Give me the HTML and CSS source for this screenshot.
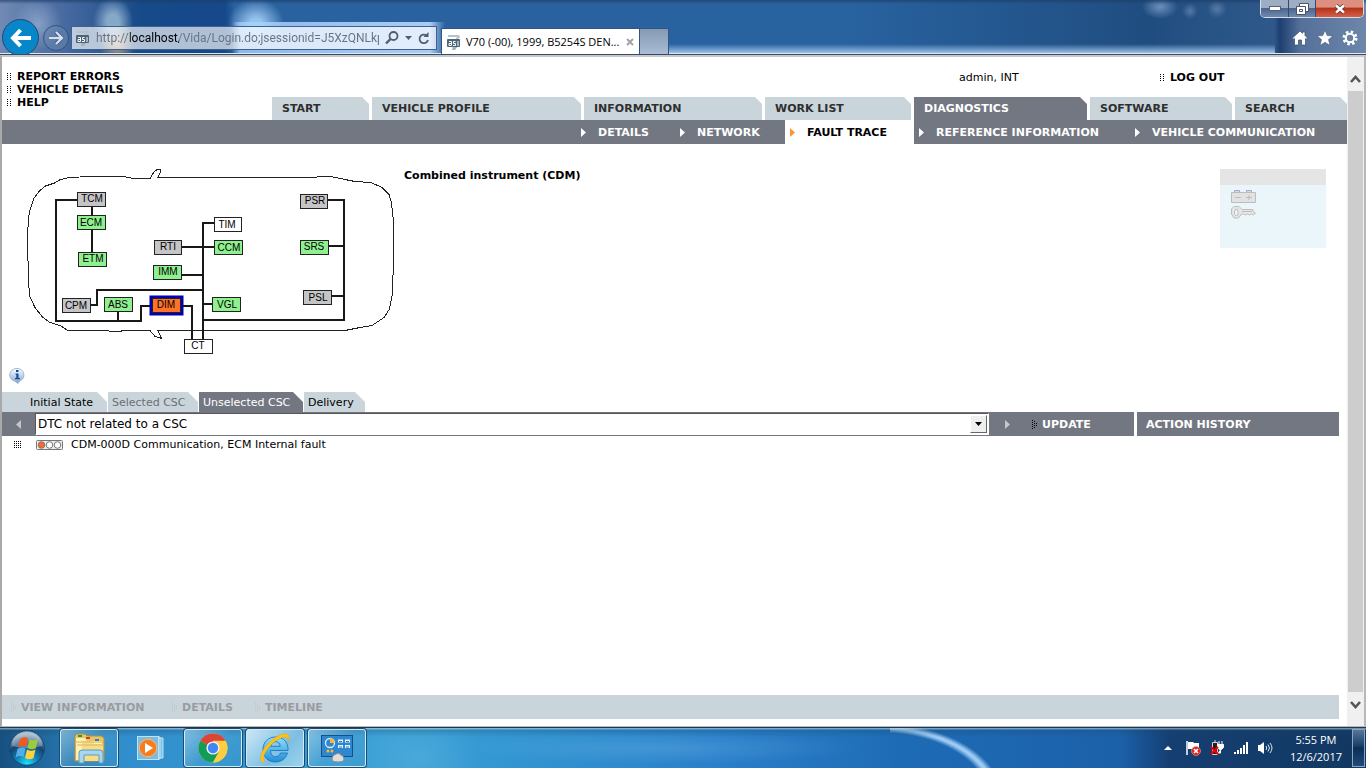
FILE: index.html
```html
<!DOCTYPE html>
<html lang="en">
<head>
<meta charset="utf-8">
<title>V70 (-00), 1999, B5254S DENSO</title>
<link rel="stylesheet" href="styles.css">
</head>
<body>
<svg class="defs" width="0" height="0" aria-hidden="true">
  <defs>
    <symbol id="site" viewBox="0 0 14 16">
      <path d="M1 1h11l1 2-3 3H8l2-3H1z" fill="#b3c2cf"/>
      <path d="M6 12h5l-3 4H5z" fill="#9fb0bf"/>
      <rect x="0" y="5" width="13" height="8" rx="1" fill="#4b6478"/>
      <path d="M2 7.500h2.500v4H2v-2h2.500M8.500 7.500H6.500v2h2v2H6M11 7v5" fill="none" stroke="#fff"/>
    </symbol>
    <symbol id="dots" viewBox="0 0 4 8">
      <path d="M0 .5h1m2 0h1M0 2.500h1m2 0h1M0 4.500h1m2 0h1M0 6.500h1m2 0h1" stroke="#000"/>
    </symbol>
    <symbol id="tri" viewBox="0 0 5 9"><path d="M0 0l5 4.500L0 9z" fill="currentColor"/></symbol>
    <symbol id="dottri" viewBox="0 0 6 9">
      <path d="M0 .5h1M2 1.500h1M0 2.500h1M4 3.500h1M2 3.500h1M0 4.500h1M2 5.500h1M4 5.500h1M0 6.500h1M2 7.500h1M0 8.500h1" stroke="currentColor"/>
    </symbol>
  </defs>
</svg>

<header class="chrome">
  <div class="nav-buttons">
    <button class="back" aria-label="Back"><svg width="22" height="20" viewBox="0 0 22 20"><path d="M10.500 2L3 10l7.500 8M3 10h18" fill="none" stroke="#fff" stroke-width="4"/></svg></button>
    <button class="forward" aria-label="Forward"><svg width="16" height="14" viewBox="0 0 16 14"><path d="M8 1l6 6-6 6M14 7H1" fill="none" stroke="#3d5a85" stroke-width="4"/><path d="M8 1l6 6-6 6M14 7H1" fill="none" stroke="#d4deec" stroke-width="2.400"/></svg></button>
  </div>
  <div class="address">
    <svg width="14" height="16"><use href="#site"/></svg>
    <input class="url" type="text" aria-label="Address" value="http://localhost/Vida/Login.do;jsessionid=J5XzQNLkp9">
    <button class="tool" aria-label="Search"><svg width="14" height="14" viewBox="0 0 14 14"><circle cx="8.500" cy="5" r="4" fill="none" stroke="#525d6c" stroke-width="1.800"/><path d="M5.500 8L1 12.500" stroke="#525d6c" stroke-width="2.400"/></svg></button>
    <button class="tool" aria-label="Address history"><svg width="7" height="4" viewBox="0 0 7 4"><path d="M0 0h7L3.500 4z" fill="#525d6c"/></svg></button>
    <button class="tool" aria-label="Refresh"><svg width="12" height="13" viewBox="0 0 12 13"><path d="M8.500 3.500A4.300 4.300 0 1 0 10 8" fill="none" stroke="#525d6c" stroke-width="1.800"/><path d="M10.500 0v5H5.500z" fill="#525d6c"/></svg></button>
  </div>
  <div class="page-tab">
    <svg width="14" height="16"><use href="#site"/></svg>
    <span class="page-tab-title">V70 (-00), 1999, B5254S DEN...</span>
    <button class="tool" aria-label="Close tab"><svg width="8" height="8" viewBox="0 0 8 8"><path d="M1 1l6 6M7 1L1 7" stroke="#a3a3a3" stroke-width="2"/></svg></button>
  </div>
  <button class="new-tab" aria-label="New tab"></button>
  <div class="chrome-right">
    <div class="window-buttons">
      <button class="win" aria-label="Minimize"><svg width="12" height="5" viewBox="0 0 12 5"><rect x=".5" y=".5" width="11" height="4" fill="#fff" stroke="#55617a"/></svg></button>
      <button class="win win-restore" aria-label="Restore"><svg width="13" height="12" viewBox="0 0 13 12"><path d="M3.500.5h9v8h-3v3h-9v-8h3z" fill="#fff" stroke="#4a5368"/><path d="M3.500 6.500h3v2h-3zM3.500 3.500h6v5" fill="none" stroke="#4a5368"/></svg></button>
      <button class="win win-close" aria-label="Close"><svg width="12" height="10" viewBox="0 0 12 10"><path d="M2 1.500l8 7M10 1.500l-8 7" stroke="#56323a" stroke-width="4"/><path d="M2 1.500l8 7M10 1.500l-8 7" stroke="#fff" stroke-width="2.400"/></svg></button>
    </div>
    <div class="chrome-tools">
      <button class="tool" aria-label="Home"><svg width="16" height="16" viewBox="0 0 16 16"><path d="M8 1l2.500 2.300V2h2.500v3.500l2.500 2.500-1 1.200-1-.7V15H9.500v-5h-3v5h-4V8.500l-1 .7L.5 8z" fill="#fff" stroke="#384b6b" stroke-width=".7"/></svg></button>
      <button class="tool" aria-label="Favorites"><svg width="16" height="16" viewBox="0 0 16 16"><path d="M8 .3l2.200 5.300 5.700.4-4.400 3.600 1.500 5.800L8 12.300l-5 3.100 1.500-5.800L.1 6l5.700-.4z" fill="#fff" stroke="#384b6b" stroke-width=".5"/></svg></button>
      <button class="tool" aria-label="Tools"><svg width="16" height="16" viewBox="0 0 16 16"><circle cx="8" cy="8" r="6" fill="none" stroke="#fff" stroke-width="3" stroke-dasharray="2.400 2.310"/><circle cx="8" cy="8" r="4.200" fill="none" stroke="#fff" stroke-width="2"/></svg></button>
    </div>
  </div>
</header>

<div class="window">
  <div class="page">
    <div class="masthead">
      <ul class="quick-links">
        <li><svg width="4" height="8"><use href="#dots"/></svg><a href="#report">REPORT ERRORS</a></li>
        <li><svg width="4" height="8"><use href="#dots"/></svg><a href="#vehicle">VEHICLE DETAILS</a></li>
        <li><svg width="4" height="8"><use href="#dots"/></svg><a href="#help">HELP</a></li>
      </ul>
      <div class="masthead-right">
        <div class="session">
          <span class="user">admin, INT</span>
          <span class="logout"><svg width="4" height="8"><use href="#dots"/></svg><a href="#logout">LOG OUT</a></span>
        </div>
        <nav class="main-tabs" aria-label="Main">
          <a href="#start">START</a>
          <a href="#profile">VEHICLE PROFILE</a>
          <a href="#information">INFORMATION</a>
          <a href="#worklist">WORK LIST</a>
          <a class="current" href="#diagnostics">DIAGNOSTICS</a>
          <a href="#software">SOFTWARE</a>
          <a href="#search">SEARCH</a>
        </nav>
      </div>
    </div>
    <nav class="sub-nav" aria-label="Diagnostics">
      <a href="#details"><svg width="5" height="9"><use href="#tri"/></svg>DETAILS</a>
      <a href="#network"><svg width="5" height="9"><use href="#tri"/></svg>NETWORK</a>
      <a class="current" href="#fault"><svg width="5" height="9"><use href="#tri"/></svg>FAULT TRACE</a>
      <a href="#reference"><svg width="5" height="9"><use href="#tri"/></svg>REFERENCE INFORMATION</a>
      <a href="#communication"><svg width="5" height="9"><use href="#tri"/></svg>VEHICLE COMMUNICATION</a>
    </nav>

    <main class="content">
      <section class="overview">
        <svg class="car" width="368" height="192" viewBox="27 165 368 192" role="img" aria-label="Vehicle network">
          <path class="outline" d="M27.500 236L28.500 218L29.500 212L33.500 199L39.500 191L45.500 186L54.500 183L59.500 180L68.500 177.500L91 176.500H123L134 178.500H150L154 172L157 169.500H160.500V172L158 177.500H316L318 176.500H331L345 179.500L355 181.500L371 182.500L382 187.500L389 194.500L391.500 203L393.500 222V258L392.500 293L389.500 309L384 317.500L372 325.500L360 327.500L345 330.500H158L161.500 338.500L155 336.500L150 330.500H123L120 331.500H110L108 330.500H68L60 325.500L50 322.500L42 316.500L35 307.500L30 297L28.500 284L27.500 236"/>
          <path class="wire" d="M77 200H56V321H141V306H151M92 206V254M118 312V320M182 306H192V340M214 223H203V340M182 247H214M182 275H203M90 305H97V290H203M203 304H213M328 200H344V320H203M328 246H344M331 296H344"/>
          <g class="off"><rect x="77.500" y="192.500" width="28" height="14"/><rect x="300.500" y="194.500" width="27" height="14"/><rect x="154.500" y="240.500" width="27" height="14"/><rect x="62.500" y="298.500" width="28" height="14"/><rect x="303.500" y="290.500" width="28" height="14"/></g>
          <g class="ok"><rect x="77.500" y="215.500" width="28" height="14"/><rect x="78.500" y="252.500" width="28" height="14"/><rect x="153.500" y="265.500" width="28" height="14"/><rect x="104.500" y="297.500" width="28" height="14"/><rect x="214.500" y="240.500" width="28" height="14"/><rect x="212.500" y="297.500" width="28" height="14"/><rect x="300.500" y="240.500" width="28" height="14"/></g>
          <g class="plain"><rect x="214.500" y="217.500" width="27" height="14"/><rect x="184.500" y="339.500" width="28" height="14"/></g>
          <rect x="151" y="297" width="31" height="17" fill="#ff7128" stroke="#0000b4" stroke-width="3"/>
          <rect x="152.500" y="298.500" width="28" height="14" fill="none" stroke="#222"/>
          <g class="labels">
            <text x="92" y="202">TCM</text><text x="91" y="226">ECM</text><text x="93" y="262">ETM</text>
            <text x="315" y="204">PSR</text><text x="314" y="250">SRS</text><text x="318" y="301">PSL</text>
            <text x="227" y="228">TIM</text><text x="229" y="251">CCM</text><text x="227" y="308">VGL</text>
            <text x="168" y="250">RTI</text><text x="168" y="275">IMM</text><text x="166" y="308">DIM</text>
            <text x="76" y="309">CPM</text><text x="118" y="308">ABS</text><text x="198" y="349">CT</text>
          </g>
        </svg>
        <h1 class="component">Combined instrument (CDM)</h1>
        <aside class="status" aria-label="Vehicle status">
          <svg width="26" height="30" viewBox="0 0 26 30">
            <path d="M3.500 2V.5h5V2m7 0V.5h5V2" fill="#ddd" stroke="#a5a5d8"/>
            <path d="M.5 2.500h24v10H.5z" fill="#e2e2e2" stroke="#bdbdbd"/>
            <path d="M4 7.500h6M15 7.500h6M18 5v5" stroke="#bdbdbd"/>
            <path d="M3 16.500h5l3 3h11v2l2.500 1.500-2 2-2-1-2 1-2-1-2 1-2-1h-2l-3 4H3l-2.500-4v-5z" fill="#e6e6e6" stroke="#bdbdbd"/>
            <path d="M5 19l2 1v5l-2 1-1.500-2v-3z" fill="#ebf6fb" stroke="#bdbdbd"/><path d="M11 21.500h10" stroke="#bdbdbd"/>
          </svg>
        </aside>
      </section>
      <button class="info" aria-label="Information"><svg width="16" height="16" viewBox="0 0 16 16"><defs><linearGradient id="bubble" x2="0" y2="1"><stop offset="0" stop-color="#fff"/><stop offset="1" stop-color="#7aa4d6"/></linearGradient></defs><path d="M8 .5a7 6.500 0 0 1 3 12.300L9 15.500l-3-2.200A7 6.500 0 0 1 8 .5z" fill="url(#bubble)" stroke="#9db6d4"/><path d="M7 2h2.500v2H7zM6.500 5.500h3v4.500H11v1.200H6V10h1.300V6.500h-.8z" fill="#174b8e"/></svg></button>

      <nav class="csc-tabs" aria-label="Fault trace">
        <a class="initial" href="#initial">Initial State</a>
        <a class="selected" href="#selected">Selected CSC</a>
        <a class="current" href="#unselected">Unselected CSC</a>
        <a class="delivery" href="#delivery">Delivery</a>
      </nav>
      <div class="toolbar">
        <div class="toolbar-main">
          <button class="step" aria-label="Previous"><svg class="flip" width="5" height="9"><use href="#tri"/></svg></button>
          <div class="picker">
            <select aria-label="Symptom"><option>DTC not related to a CSC</option></select>
            <span class="picker-arrow"><svg width="7" height="4" viewBox="0 0 7 4"><path d="M0 0h7L3.500 4z"/></svg></span>
          </div>
          <button class="step step-next" aria-label="Next"><svg width="5" height="9"><use href="#tri"/></svg></button>
          <button class="update"><svg width="6" height="9"><use href="#dottri"/></svg>UPDATE</button>
        </div>
        <h2 class="history">ACTION HISTORY</h2>
      </div>
      <ul class="faults">
        <li>
          <svg width="8" height="8" viewBox="0 0 8 8"><path d="M0 .5h8M0 2.500h8M0 4.500h8M0 6.500h8" stroke="#000" stroke-dasharray="1 1"/></svg>
          <svg class="lamps" width="27" height="10" viewBox="0 0 27 10"><rect x=".5" y=".5" width="26" height="9" rx="1" fill="#eee" stroke="#777"/><circle cx="5.500" cy="5" r="3.300" fill="#ff6a28" stroke="#777"/><circle cx="13.500" cy="5" r="3.300" fill="#fff" stroke="#777"/><circle cx="21.500" cy="5" r="3.300" fill="#fff" stroke="#777"/></svg>
          <span>CDM-000D Communication, ECM Internal fault</span>
        </li>
      </ul>
      <div class="actions">
        <button class="view" disabled><svg width="6" height="9"><use href="#dottri"/></svg>VIEW INFORMATION</button>
        <button class="details" disabled><svg width="6" height="9"><use href="#dottri"/></svg>DETAILS</button>
        <button disabled><svg width="6" height="9"><use href="#dottri"/></svg>TIMELINE</button>
      </div>
    </main>
  </div>
  <div class="scrollbar">
    <button aria-label="Scroll up"><svg width="11" height="8" viewBox="0 0 11 8"><path d="M1 7l4.500-5L10 7" fill="none" stroke="#555" stroke-width="2.600"/></svg></button>
    <div class="thumb"></div>
    <button aria-label="Scroll down"><svg width="11" height="8" viewBox="0 0 11 8"><path d="M1 1l4.500 5L10 1" fill="none" stroke="#555" stroke-width="2.600"/></svg></button>
  </div>
</div>

<footer class="taskbar">
  <button class="start" aria-label="Start"><svg width="36" height="36" viewBox="0 0 36 36">
    <defs><radialGradient id="orb" cx=".5" cy=".95" r=".85"><stop offset="0" stop-color="#19e4ff"/><stop offset=".35" stop-color="#1586bd"/><stop offset=".7" stop-color="#14436f"/><stop offset="1" stop-color="#8da9bf"/></radialGradient></defs>
    <circle cx="18" cy="18" r="17.300" fill="url(#orb)" stroke="#16436e"/><path d="M3 16A15 14 0 0 1 33 16Q18 20 3 16z" fill="#fff" opacity=".3"/>
    <path d="M11 9q4-3 8-.5L17 17q-4-2-8 .5z" fill="#ee5a24"/><path d="M20.500 9q4 2.500 8.500 0L27 18q-4 2.500-8.500 0z" fill="#9ccc3c"/><path d="M8.500 19q4-2.500 8-.5L14.500 27q-4-2-8 .5z" fill="#52aee8"/><path d="M18 19.500q4 2.500 8.500 0l-2 8.500q-4 2.500-8.500 0z" fill="#ffd23e"/>
  </svg></button>
  <button class="task" aria-label="Windows Explorer"><svg width="34" height="32" viewBox="0 0 34 32">
    <path d="M3 4l2-2h8l2 2h14l3 2v23H3z" fill="#e7c468" stroke="#b99238"/><path d="M4 6h9l2 3h15v19H4z" fill="#fff1ad"/><path d="M10 9h10l2 3h9v17H10z" fill="#f8dc86"/><path d="M3 10h28M5 13h27" stroke="#d8b45a"/><rect x="6" y="3" width="4" height="2" fill="#1f9e34"/><rect x="14" y="5" width="4" height="2" fill="#d43a2a"/><rect x="23" y="7" width="4" height="2" fill="#2a7fd4"/>
    <path d="M7 31V21q0-3 3-3h18q3 0 3 3v10h-4v-8H12v8z" fill="#a7d6ee" stroke="#5a9cc4"/>
  </svg></button>
  <button class="task task-idle" aria-label="Media Player"><svg width="30" height="28" viewBox="0 0 30 28">
    <path d="M20 3h4v22h-4M22 4h5v20h-5" fill="#7ec2e8" stroke="#bfe2f5"/><rect x="1.500" y="2.500" width="21" height="23" fill="#7dbce2" stroke="#bfe2f5"/><circle cx="12" cy="14" r="8.700" fill="#f57e20" stroke="#ffb56b"/><path d="M9 9l8 5-8 5z" fill="#fff"/>
  </svg></button>
  <button class="task" aria-label="Chrome"><svg width="30" height="30" viewBox="0 0 30 30">
    <circle cx="15" cy="15" r="14.500" fill="#ffcd40"/><path d="M15 15L2.400 7.750A14.500 14.500 0 0 0 15 29.500l6.500-11z" fill="#0f9d58"/><path d="M15 15L2.400 7.750A14.500 14.500 0 0 1 27.600 7.750H15z" fill="#db4437"/><path d="M15 8.500h12.900A14.500 14.500 0 0 1 15 29.500l5.800-11z" fill="#ffcd40"/>
    <circle cx="15" cy="15" r="6.600" fill="#f1f1f1"/><circle cx="15" cy="15" r="5.200" fill="#4285f4"/>
  </svg></button>
  <button class="task task-active" aria-label="Internet Explorer"><svg width="32" height="32" viewBox="0 0 32 32">
    <defs><linearGradient id="ie" x2="0" y2="1"><stop offset="0" stop-color="#8fe0fb"/><stop offset="1" stop-color="#1f8fd6"/></linearGradient></defs>
    <path fill-rule="evenodd" d="M28.500 21C26.500 27.500 21.500 30 16.500 30 8.500 30 4 24.500 4 17.500 4 10 9.500 5 16.500 5 25 5 29.500 11 29 18.500H11.500c.3 4 2.200 6.300 5.200 6.300 2.200 0 3.800-1.300 4.800-3.800zM11.800 14.300h9.400c-.2-2.800-2-4.600-4.600-4.600s-4.500 1.800-4.800 4.600z" fill="url(#ie)" stroke="#1a78ba" stroke-width=".9"/><path d="M3 30C-2 24 8 8 22 2.500c7-2.500 10 1 7 7.500.5-5-2.500-5.800-7-3.900C11.500 10.500 2 23.500 5.500 28.500 5 30.500 4 31 3 30z" fill="#fcc21b" stroke="#d99a10" stroke-width=".4"/>
  </svg></button>
  <button class="task" aria-label="Control Panel"><svg width="32" height="30" viewBox="0 0 32 30">
    <rect x=".5" y="2.500" width="31" height="21" fill="#2f88cf" stroke="#174f8c"/><circle cx="9" cy="10" r="4.500" fill="none" stroke="#d4efff" stroke-width="1.300"/><path d="M9 10V5a5 5 0 0 1 4.500 5z" fill="#ffb432"/><path d="M17 8h5m2 0h5M17 13.500h5m2 0h5" stroke="#e0f5ff" stroke-width="3"/><path d="M18 8.500h3m4 0h3M18 14h3m4 0h3" stroke="#2c75b4"/><circle cx="7" cy="18" r="1.500" fill="#ffb432"/><circle cx="11" cy="18" r="1.500" fill="#ffb432"/><path d="M11 26q0-4 4-5 3-2 5 1 3 1 3 4 0 3-6 3t-6-3z" fill="#ddd" stroke="#888"/>
  </svg></button>
  <div class="tray">
    <button class="tool" aria-label="Hidden icons"><svg width="8" height="4" viewBox="0 0 8 4"><path d="M0 4h8L4 0z" fill="#fff"/></svg></button>
    <button class="tool" aria-label="Action Center"><svg width="16" height="16" viewBox="0 0 16 16"><path d="M2 1v14" stroke="#fff" stroke-width="1.500"/><path d="M3 2h5l1 1h5v7H9L8 9H3z" fill="#fff"/><circle cx="11" cy="11" r="4.500" fill="#d8281c" stroke="#f2a19a" stroke-width=".6"/><path d="M9 9l4 4m0-4l-4 4" stroke="#fff" stroke-width="1.600"/></svg></button>
    <button class="tool" aria-label="Power"><svg width="16" height="16" viewBox="0 0 16 16"><path d="M3.500 2.500h5v12h-5zM5 1h2" fill="#222" stroke="#cfd6df"/><path d="M10 1v3m3-3v3M8.500 4.500h6v3l-2 2h-2l-2-2zM11.500 9v4H9" fill="#fff" stroke="#fff"/><path d="M2 7l7 7m0-7l-7 7" stroke="#f00000" stroke-width="2.200"/></svg></button>
    <button class="tool" aria-label="Network"><svg width="16" height="14" viewBox="0 0 16 14"><path d="M2 11v2M5 9v4M8 7v6M11 4v9M14 1v12" stroke="#fff" stroke-width="2"/></svg></button>
    <button class="tool" aria-label="Volume"><svg width="16" height="14" viewBox="0 0 16 14"><path d="M1 4h2l4-3v12l-4-3H1z" fill="#fff"/><path d="M9 5q1.500 2 0 4M11 3.500q3 3.500 0 7M13 2q4 5 0 10" fill="none" stroke="#dfe8f2"/></svg></button>
    <div class="clock"><span>5:55 PM</span><span>12/6/2017</span></div>
  </div>
  <button class="desktop" aria-label="Show desktop"></button>
</footer>
</body>
</html>
```
FILE: styles.css
```css
* { box-sizing: border-box; }
body {
  margin: 0;
  min-height: 100vh;
  display: flex;
  flex-direction: column;
  font: 11px/13px Verdana, "DejaVu Sans", sans-serif;
  color: #000;
  background: #fff;
}
a { color: inherit; text-decoration: none; }
ul, h1, h2 { margin: 0; padding: 0; list-style: none; font-size: 11px; }
button { margin: 0; padding: 0; border: 0; background: none; font: inherit; color: inherit; display: flex; align-items: center; justify-content: center; }
svg { display: block; flex: none; }
.defs { position: absolute; }

/* Browser frame */
.chrome {
  display: flex;
  align-items: flex-end;
  height: 55px;
  border-bottom: 1px solid #3a4961;
  overflow: hidden;
  font: 12px/16px "Segoe UI", "Open Sans", sans-serif;
  background:
    linear-gradient(#1c3c64aa 0, transparent 4px),
    linear-gradient(#dbe8f8, #dbe8f8) 0 53px / 100% 1px no-repeat,
    radial-gradient(ellipse 24px 26px at 38px 24px, #9db4d6aa, transparent),
    radial-gradient(ellipse 20px 26px at 113px 22px, #9dbdd6cc 30%, transparent),
    radial-gradient(ellipse 18px 22px at 117px 44px, #b79f7e, transparent),
    radial-gradient(ellipse 28px 26px at 256px 24px, #a8d3fbdd 20%, transparent),
    radial-gradient(ellipse 18px 12px at 1160px 7px, #7fa0cbcc, transparent),
    radial-gradient(ellipse 8px 8px at 1190px 11px, #7594bd99, transparent),
    radial-gradient(ellipse 10px 9px at 1217px 9px, #7594bd99, transparent),
    linear-gradient(90deg, transparent 1274px, #1e3f70 1280px, #54709a 1300px, #6d86aa),
    linear-gradient(transparent, #a9cbf2) 445px 44px / 830px 10px no-repeat,
    linear-gradient(90deg, transparent 232px, #8cb8ec 240px, #a9ccf6 430px, transparent 445px) 0 22px / 100% 33px no-repeat,
    linear-gradient(90deg, #7189b4 0, #4a6ca1 60px, #174a89 140px, #16488a 225px, #2a62a0 235px, #2a62a0 450px, #28629f 850px, #204d80 1150px, #3a6192);
}
.tool { flex: none; }
.nav-buttons { display: flex; align-items: center; gap: 4px; width: 71px; padding-left: 2px; margin-bottom: -2px; }
.back { width: 37px; height: 37px; border-radius: 50%; background: #0787c9; border: 1px solid #2a4670; }
.forward { width: 26px; height: 26px; border-radius: 50%; border: 1px solid #34527f; background: #6683ac99; }
.address {
  display: flex;
  align-items: center;
  gap: 6px;
  width: 366px;
  height: 24px;
  margin-bottom: 4px;
  padding: 0 6px 0 4px;
  border: 1px solid #40608e;
  background: #ffffffa8;
}
.url {
  flex: 1;
  min-width: 0;
  padding: 0;
  border: 0;
  font: 12px/16px "Segoe UI", Roboto, sans-serif;
  color: #596372;
  background: linear-gradient(90deg, #687180 34px, #000 34px, #000 83px, #687180 83px);
  background-clip: text;
  -webkit-background-clip: text;
  -webkit-text-fill-color: transparent;
}
.page-tab {
  display: flex;
  align-items: center;
  gap: 5px;
  width: 199px;
  height: 26px;
  margin-left: 4px;
  padding: 0 5px;
  background: #fff;
  border: 1px solid #34547f;
  border-bottom: 0;
  font-size: 11px;
}
.page-tab-title { flex: 1; white-space: nowrap; }
.new-tab { width: 29px; height: 26px; background: linear-gradient(#8499b3, #a9bdd4); border: 1px solid #34547f; border-left: 0; border-bottom: 0; }
.chrome-right { display: flex; flex-direction: column; align-items: flex-end; justify-content: space-between; align-self: stretch; margin-left: auto; padding: 0 2px 8px 0; }
.window-buttons { display: flex; height: 18px; border: 1px solid #d4dce8; border-top: 0; border-radius: 0 0 5px 5px; overflow: hidden; }
.win { width: 28px; background: linear-gradient(#9dadc4 0 45%, #4c668f 50%, #7089ad); border-right: 1px solid #33486a; }
.win-restore { width: 27px; }
.win-close { width: 47px; background: linear-gradient(#dc8e80 0 40%, #b8331a 50%, #d4604a); border: 0; }
.chrome-tools { display: flex; gap: 9px; padding-right: 6px; }

/* Document window */
.window { flex: 1; display: flex; border: 2px solid #a9a9a9; border-top: 2px solid #c8c8c8; border-right-color: #b8b8b8; border-bottom: 1px solid #b8b8b8; }
.page { flex: 1; min-width: 0; display: flex; flex-direction: column; }
.masthead { display: flex; font-weight: bold; }
.quick-links { width: 270px; padding: 13px 0 0 5px; flex: none; }
.quick-links li, .logout { display: flex; align-items: center; gap: 6px; }
.masthead-right { flex: 1; }
.session { display: flex; height: 40px; padding-top: 14px; }
.user { width: 201px; margin-left: auto; font-weight: normal; }
.logout { width: 187px; align-self: flex-start; }
.main-tabs { display: grid; grid-template-columns: 97fr 209fr 178fr 146fr 173fr 142fr 112fr; gap: 3px; }
.main-tabs a { height: 23px; padding-left: 10px; line-height: 24px; color: #2f2f2f; background: #c9d5db; clip-path: polygon(0 0, calc(100% - 7px) 0, 100% 7px, 100% 100%, 0 100%); white-space: nowrap; }
.main-tabs .current { color: #fff; background: #737782; }
.sub-nav { display: grid; grid-template-columns: 99px 110px 129px 216px 190px; justify-content: end; height: 24px; padding-right: 27px; font-weight: bold; color: #fff; background: #737782; white-space: nowrap; }
.sub-nav a { display: flex; align-items: center; gap: 12px; padding-left: 5px; }
.sub-nav .current { color: #000; background: #fff; }
.sub-nav .current svg { color: #ff9430; }

.content { flex: 1; display: flex; flex-direction: column; padding-right: 8px; }
.overview { display: flex; padding: 21px 13px 0 25px; }
.car { overflow: visible; }
.outline { fill: none; stroke: #222; shape-rendering: crispEdges; }
.wire { fill: none; stroke: #1c1717; stroke-width: 2; shape-rendering: crispEdges; }
.off rect, .ok rect, .plain rect { stroke: #222; }
.off { fill: #c5c4c7; }
.ok { fill: #8ff08f; }
.plain { fill: #fff; }
.labels { font: 10px Arial, "Liberation Sans", sans-serif; text-anchor: middle; }
.component { flex: 1; margin: 4px 0 0 9px; }
.status { width: 106px; height: 79px; margin-top: 4px; padding: 5px 0 0 11px; border-top: 16px solid #e5e5e5; background: #ebf6fb; }
.info { width: 16px; margin: 11px 0 8px 7px; }
.csc-tabs { display: flex; gap: 1px; height: 20px; line-height: 22px; white-space: nowrap; }
.csc-tabs a { padding-left: 4px; background: #c9d5db; clip-path: polygon(0 0, calc(100% - 10px) 0, 100% 10px, 100% 100%, 0 100%); }
.csc-tabs .initial { width: 105px; padding-left: 28px; }
.csc-tabs .selected { width: 90px; color: #6b6f73; }
.csc-tabs .current { width: 104px; color: #fff; background: #737782; }
.csc-tabs .delivery { width: 61px; }
.toolbar { display: flex; gap: 3px; color: #fff; font-weight: bold; }
.toolbar-main, .history { display: flex; align-items: center; height: 24px; background: #737782; }
.toolbar-main { flex: 1; }
.history { width: 202px; padding-left: 9px; }
.step { width: 33px; color: #c6c6c6; }
.step-next { width: 36px; }
.flip { transform: scaleX(-1); }
.picker { flex: 1; display: grid; border: 1px solid #555; border-right-color: #fff; border-bottom-color: #fff; height: 22px; background: #fff; }
.picker select, .picker-arrow { grid-area: 1 / 1; }
.picker select { appearance: none; min-width: 0; padding: 0 0 0 2px; border: 0; font: 12px/16px Verdana, "DejaVu Sans", sans-serif; color: #000; background: #fff; }
.picker-arrow { justify-self: end; width: 17px; margin: 1px; display: grid; place-items: center; pointer-events: none; background: #efefef; border: 1px solid #fff; border-right-color: #666; border-bottom-color: #666; }
.update { width: 109px; justify-content: flex-start; gap: 4px; padding-left: 7px; }
.update svg { color: #000; }
.faults { flex: 1; padding-top: 2px; }
.faults li { display: flex; align-items: center; gap: 8px; padding-left: 12px; }
.lamps { margin: 0 0 0 6px; }
.actions { display: flex; align-items: center; height: 24px; margin-bottom: 7px; padding-left: 9px; background: #c9d5db; font-weight: bold; color: #9a9c9f; }
.actions button { gap: 4px; justify-content: flex-start; }
.actions .view { width: 161px; }
.actions .details { width: 83px; }
.actions svg { color: #b9c5cb; }

.scrollbar { width: 17px; display: flex; flex-direction: column; background: #f0f0f0; }
.scrollbar button { width: 17px; height: 34px; padding-top: 10px; }
.scrollbar button:last-child { padding: 0 0 8px; }
.thumb { flex: 1; margin: 0 1px; background: #cdcdcd; }

/* Taskbar */
.taskbar {
  display: flex;
  align-items: stretch;
  gap: 4px;
  height: 41px;
  padding: 1px 1px 1px 9px;
  border-top: 1px solid #203850;
  color: #fff;
  font: 11px/17px "Segoe UI", "Open Sans", sans-serif;
  background:
    linear-gradient(#a9cbdf99 0 1px, #1c466044 2px, transparent 9px),
    radial-gradient(ellipse 125px 76px at -10px 70px, transparent 86%, #9ccaf4 91%, #9ccaf4 93%, transparent 98%) 890px 0 / 120px 40px no-repeat,
    radial-gradient(ellipse 200px 16px at 660px 20px, #6db4e255, transparent),
    radial-gradient(ellipse 60px 50px at 420px 30px, #6cc0e455, transparent),
    linear-gradient(90deg, #175081 0, #2f8dcb 110px, #3ba0d6 380px, #3397d2 500px, #2a7fca 720px, #1e6bb5 900px, #1b61aa 1120px, #153f72 1170px, #123861);
}
.start { width: 36px; margin-right: 11px; }
.task { width: 58px; border: 1px solid #d2ebf8; border-radius: 3px; background: linear-gradient(135deg, #b5dcef99, #5aa9d055 50%, #3b93c533); box-shadow: 0 0 0 1px #1d4b6f; }
.task-idle { border-color: transparent; background: none; box-shadow: none; }
.task-active { background: linear-gradient(135deg, #e4f5fcdd, #8fc8e6cc 60%, #b4e3f5cc); }
.tray { display: flex; align-items: center; gap: 8px; margin-left: auto; }
.tray .tool:first-child { margin-right: 5px; }
.clock { display: flex; flex-direction: column; align-items: center; margin: 0 6px 0 9px; }
.desktop { width: 13px; border: 1px solid #8ba6c2; background: linear-gradient(#577699, #173e68 45%, #0f2d51 50%, #1d4d7d); }
```
